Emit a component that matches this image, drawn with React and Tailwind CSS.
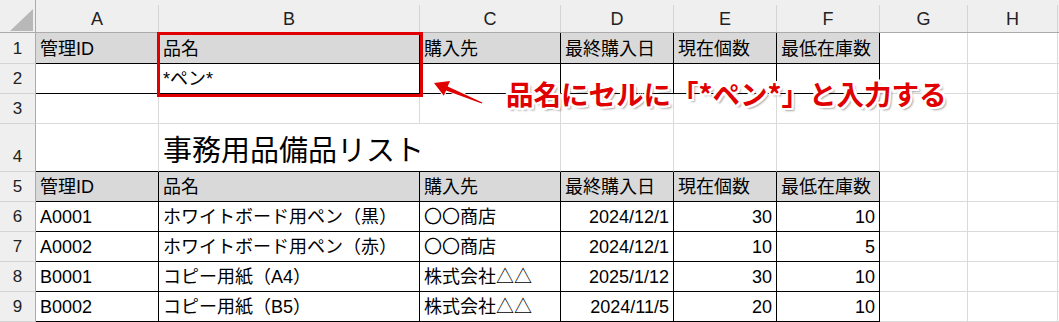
import React from 'react'

const COLS = ['A', 'B', 'C', 'D', 'E', 'F', 'G', 'H']
const HEADS = ['管理ID', '品名', '購入先', '最終購入日', '現在個数', '最低在庫数']

const items = [
  ['A0001', 'ホワイトボード用ペン（黒）', '〇〇商店', '2024/12/1', '30', '10'],
  ['A0002', 'ホワイトボード用ペン（赤）', '〇〇商店', '2024/12/1', '10', '5'],
  ['B0001', 'コピー用紙（A4）', '株式会社△△', '2025/1/12', '30', '10'],
  ['B0002', 'コピー用紙（B5）', '株式会社△△', '2024/11/5', '20', '10'],
]

// numeric columns (D, E, F) sit on the right like Excel values
const rightAligned = [false, false, false, true, true, true]

const Cell = ({ text = '', right, fill, boxed, bottomLine }) => (
  <div
    className={`flex items-end overflow-visible whitespace-nowrap border-r border-b pb-[4px] leading-[20px] text-[18px] text-black ${
      right ? 'justify-end pr-[4px]' : 'pl-[4px]'
    } ${fill ? 'bg-[#d9d9d9]' : 'bg-white'} ${
      boxed ? 'border-black' : bottomLine ? 'border-r-[#dadada] border-b-black' : 'border-[#dadada]'
    }`}
  >
    {text}
  </div>
)

const RowHead = ({ n }) => (
  <div className="flex items-end justify-center border-r border-b border-r-[#ababab] border-b-[#d4d4d4] bg-[#efefef] pb-[4px] text-[17px] leading-[20px] text-[#222]">
    {n}
  </div>
)

const Row = ({ n, cells = [], fill, boxed, bottomLine }) => (
  <>
    <RowHead n={n} />
    {COLS.map((c, i) => {
      const inTable = i < 6
      return (
        <Cell
          key={c}
          text={cells[i]}
          right={inTable && !fill && rightAligned[i]}
          fill={inTable && fill}
          boxed={inTable && boxed}
          bottomLine={inTable && bottomLine}
        />
      )
    })}
    <div className="border-b border-[#dadada] bg-white" />
  </>
)

export default function App() {
  return (
    <div className="relative h-[322px] w-[1059px] overflow-hidden bg-white [font-family:'Liberation_Sans','Noto_Sans_CJK_JP',sans-serif]">
      <div className="grid grid-cols-[36px_123px_261px_141px_113px_103px_103px_88px_90px_1fr] grid-rows-[33px_31px_30px_30px_48px_30px_30px_30px_30px_30px]">
        {/* select-all corner */}
        <div className="flex items-end justify-end border-r border-b border-[#ababab] bg-[#efefef] pr-[2px] pb-[1px]">
          <svg width="23" height="22" viewBox="0 0 23 22">
            <path d="M0 22 L23 22 L23 0 Z" fill="#b8b8b8" />
          </svg>
        </div>
        {COLS.map((c) => (
          <div key={c} className="border-b border-[#ababab] bg-[#efefef] pt-[5px]">
            <div className="flex h-full items-center justify-center border-r border-[#d4d4d4] text-[18px] leading-none text-[#222]">
              {c}
            </div>
          </div>
        ))}
        <div className="border-b border-[#ababab] bg-[#efefef]" />

        <Row n={1} cells={HEADS} fill boxed />
        <Row n={2} cells={['', '*ペン*']} boxed />
        <Row n={3} />

        {/* title row, its bottom edge is the top of the list */}
        <RowHead n={4} />
        <Cell bottomLine />
        <div className="flex items-end overflow-visible whitespace-nowrap border-b border-black bg-white pb-[3px] pl-[4px] text-[29px] leading-[34px] text-black">
          事務用品備品リスト
        </div>
        <Cell bottomLine />
        <Cell bottomLine />
        <Cell bottomLine />
        <Cell bottomLine />
        <Cell />
        <Cell />
        <div className="border-b border-[#dadada] bg-white" />

        <Row n={5} cells={HEADS} fill boxed />
        {items.map((r, i) => (
          <Row key={r[0]} n={6 + i} cells={r} boxed />
        ))}
      </div>

      {/* highlight around B1:B2 */}
      <div className="pointer-events-none absolute left-[157px] top-[32px] h-[65px] w-[266px] border-[3.5px] border-[#e00000]" />

      {/* pointer arrow */}
      <svg className="pointer-events-none absolute left-0 top-0" width="1059" height="322">
        <polygon
          points="434,83 450,81 447.7,86.4 482.3,102.4 481.7,103.6 446.1,90.4 443.8,95.8"
          fill="#e00000"
          stroke="#fff"
          strokeWidth="2"
          strokeLinejoin="round"
          paintOrder="stroke"
        />
      </svg>

      <div className="pointer-events-none absolute left-[506px] top-[80px] whitespace-nowrap text-[27.5px] font-bold leading-[27px] text-[#e00000] [font-family:'Noto_Sans_CJK_JP',sans-serif] [text-shadow:2px_0_0_#fff,-2px_0_0_#fff,0_2px_0_#fff,0_-2px_0_#fff,2px_2px_0_#fff,-2px_-2px_0_#fff,2px_-2px_0_#fff,-2px_2px_0_#fff,3px_3px_2px_rgba(0,0,0,0.35)]">
        品名にセルに「*ペン*」と入力する
      </div>
    </div>
  )
}
